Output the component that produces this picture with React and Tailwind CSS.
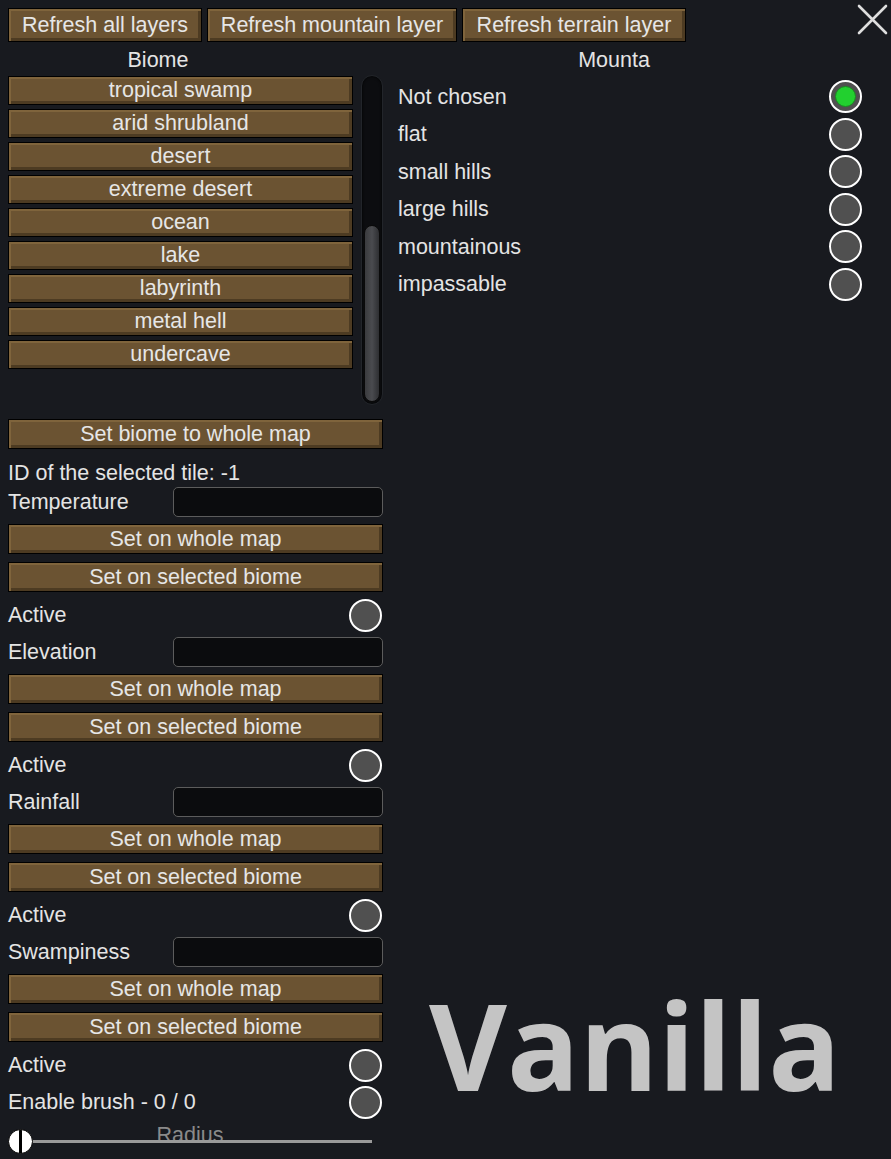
import React from "react";

const btn =
  "flex items-center justify-center border border-black bg-[#6b5332] text-[#e6e6e6] shadow-[inset_2px_2px_0_#7f643c,inset_-3px_-3px_0_#4d3b22] leading-[1.2] pt-[1px]";

function Radio({ on }) {
  return (
    <div className="flex h-[33px] w-[33px] items-center justify-center rounded-full border-[2.5px] border-white bg-[#505050]">
      {on && <div className="h-[21px] w-[21px] rounded-full border border-[#1a8a22] bg-[#22d02f]" />}
    </div>
  );
}

function Section({ label }) {
  return (
    <div className="mt-[5px] first:mt-0">
      <div className="flex h-[30px] items-center justify-between">
        <span>{label}</span>
        <div className="h-[30px] w-[210px] rounded-[5px] border border-[#5c5c5c] bg-[#0b0c0e]" />
      </div>
      <div className={`${btn} mt-[7px] h-[30px]`}>Set on whole map</div>
      <div className={`${btn} mt-[8px] h-[30px]`}>Set on selected biome</div>
      <div className="mt-[6px] flex h-[34px] items-center justify-between">
        <span>Active</span>
        <div className="mr-[1px]">
          <Radio />
        </div>
      </div>
    </div>
  );
}

const biomes = [
  "tropical swamp",
  "arid shrubland",
  "desert",
  "extreme desert",
  "ocean",
  "lake",
  "labyrinth",
  "metal hell",
  "undercave",
];

const mountains = ["Not chosen", "flat", "small hills", "large hills", "mountainous", "impassable"];

export default function App() {
  return (
    <div
      className="h-[1159px] w-[891px] overflow-hidden bg-[#181a1f] text-[21.5px] text-[#e4e4e4]"
      style={{ fontFamily: '"Liberation Sans", Arial, sans-serif' }}
    >
      <div className="flex items-start pl-[8px] pt-[4px]">
        <div className="mt-[4px] flex gap-[5px]">
          <div className={`${btn} h-[34px] w-[194px]`}>Refresh all layers</div>
          <div className={`${btn} h-[34px] w-[250px]`}>Refresh mountain layer</div>
          <div className={`${btn} h-[34px] w-[224px]`}>Refresh terrain layer</div>
        </div>
        <svg className="ml-auto mr-[3px]" width="31" height="31" viewBox="0 0 31 31">
          <path d="M2 2 L29 29 M29 2 L2 29" stroke="#dedede" strokeWidth="2.6" strokeLinecap="round" />
        </svg>
      </div>

      <div className="flex">
        {/* left column */}
        <div className="ml-[8px] w-[375px]">
          <div className="mt-[6px] flex h-[24px] w-[300px] items-center justify-center">Biome</div>
          <div className="mt-[3px] flex h-[330px] gap-[8px]">
            <div className="w-[345px] pt-[1px]">
              {biomes.map((b) => (
                <div key={b} className={`${btn} mb-[4px] h-[29px]`}>
                  {b}
                </div>
              ))}
            </div>
            <div className="relative h-[330px] w-[22px] rounded-full border border-[#22252a] bg-[#0c0d10] shadow-[inset_0_0_3px_#000]">
              <div className="absolute bottom-[2px] left-[2px] right-[2px] h-[177px] rounded-full border border-[#0a0a0a] bg-gradient-to-r from-[#3a3b3e] via-[#4a4b4f] to-[#2e2f32]" />
            </div>
          </div>
          <div className={`${btn} mt-[14px] h-[30px]`}>Set biome to whole map</div>
          <div className="mt-[12px] flex h-[24px] items-center">ID of the selected tile: -1</div>
          <div className="mt-[2px]">
            <Section label="Temperature" />
            <Section label="Elevation" />
            <Section label="Rainfall" />
            <Section label="Swampiness" />
          </div>
          <div className="mt-[3px] flex h-[34px] items-center justify-between">
            <span>Enable brush - 0 / 0</span>
            <div className="mr-[1px]">
              <Radio />
            </div>
          </div>
          <div className="relative mt-[9px] h-[26px] w-[364px]">
            <div className="absolute left-0 right-0 top-[-6px] h-[20px] overflow-hidden text-center leading-[26px] text-[#8a8a8a]">
              Radius
            </div>
            <div className="absolute left-[20px] right-0 top-[12px] h-[3px] bg-[#9a9a9a]" />
            <div className="absolute left-0 top-[1px] flex h-[25px] w-[25px] justify-center overflow-hidden rounded-full border border-black bg-white">
              <div className="h-full w-[3px] bg-black" />
            </div>
          </div>
        </div>

        {/* right column */}
        <div className="ml-[15px] flex w-[464px] flex-col">
          <div className="mt-[6px] flex h-[24px] w-[432px] items-center justify-center">Mounta</div>
          <div className="mt-[6px]">
            {mountains.map((m, i) => (
              <div key={m} className="flex h-[37.5px] items-center justify-between">
                <span>{m}</span>
                <Radio on={i === 0} />
              </div>
            ))}
          </div>
          <div
            className="mb-[49px] ml-[31px] mt-auto text-[120px] font-bold leading-none text-[#c4c4c4]"
            style={{ fontFamily: '"Open Sans", "DejaVu Sans", sans-serif' }}
          >
            Vanilla
          </div>
        </div>
      </div>
    </div>
  );
}
